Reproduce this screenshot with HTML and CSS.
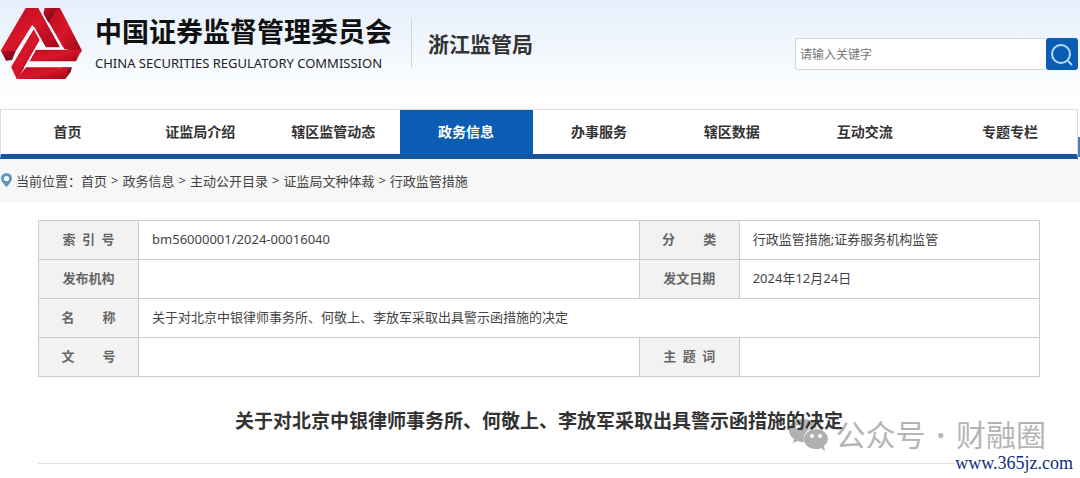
FILE: index.html
```html
<!DOCTYPE html>
<html lang="zh-CN">
<head>
  <meta charset="UTF-8" />
  <meta name="viewport" content="width=device-width, initial-scale=1.0" />
  <title>关于对北京中银律师事务所、何敬上、李放军采取出具警示函措施的决定</title>
  <link rel="stylesheet" href="styles.css">
</head>
<body>
  <header class="header">
    <svg class="logo" viewBox="0 0 252 234" aria-hidden="true">
      <defs>
        <linearGradient id="red" x1="0" y1="0" x2="1" y2="1">
          <stop offset="0" stop-color="#b80c1c" />
          <stop offset="0.5" stop-color="#d8162a" />
          <stop offset="1" stop-color="#a00616" />
        </linearGradient>
        <linearGradient id="fold" x1="0" y1="0" x2="1" y2="1">
          <stop offset="0" stop-color="#c8102a" />
          <stop offset="1" stop-color="#5c0410" />
        </linearGradient>
      </defs>
      <path fill="url(#fold)" d="M2 139H48L36 168L18 170Z" />
      <path fill="url(#fold)" d="M134 12H176L146 56L128 38Z" />
      <path fill="url(#fold)" d="M186 190H216L212 204L196 225Z" />
      <path fill="url(#red)" d="M77 12H116L180 130H138L97 62L48 140H2Z" />
      <path fill="url(#red)" d="M146 54L172 12H180L245 138L243 146L192 134Z" />
      <path fill="url(#red)" d="M106 137H245L228 172H88Z" />
      <path fill="url(#red)" d="M78 190H206L196 225H50Z" />
      <path fill="url(#red)" d="M102 74L120 108L62 210L50 225L32 186Z" />
      <path fill="none" stroke="#f3f7fd" stroke-width="5" d="M101 70L122 108L74 192M100 72L30 190M118 12L185 133M106 134H190" />
    </svg>
    <div class="brand">
      <div class="brand-cn">中国证券监督管理委员会</div>
      <div class="brand-en">CHINA SECURITIES REGULATORY COMMISSION</div>
    </div>
    <div class="bureau">浙江监管局</div>
    <form class="search">
      <input type="text" placeholder="请输入关键字" aria-label="请输入关键字">
      <button type="button" aria-label="搜索">
        <svg viewBox="0 0 32 32">
          <circle cx="15" cy="16" r="9" />
          <path d="M22 23L26 27" />
        </svg>
      </button>
    </form>
  </header>

  <nav class="nav">
    <a href="#">首页</a>
    <a href="#">证监局介绍</a>
    <a href="#">辖区监管动态</a>
    <a href="#" class="active">政务信息</a>
    <a href="#">办事服务</a>
    <a href="#">辖区数据</a>
    <a href="#">互动交流</a>
    <a href="#" class="last">专题专栏</a>
  </nav>

  <div class="crumbs">
    <svg class="pin" viewBox="0 0 13 16" aria-hidden="true">
      <path d="M6.500 1A5.500 5.500 0 0 0 1 6.500C1 10 6.500 15 6.500 15S12 10 12 6.500A5.500 5.500 0 0 0 6.500 1Z" />
      <circle cx="6.500" cy="6.500" r="2.600" />
    </svg>
    <span>当前位置：</span>
    <a href="#">首页</a><i>&gt;</i>
    <a href="#">政务信息</a><i>&gt;</i>
    <a href="#">主动公开目录</a><i>&gt;</i>
    <a href="#">证监局文种体裁</a><i>&gt;</i>
    <a href="#">行政监管措施</a>
  </div>

  <main class="content">
    <table class="info">
      <colgroup>
        <col class="col-label"><col class="col-wide"><col class="col-label"><col class="col-narrow">
      </colgroup>
      <tr>
        <th>索&ensp;引&ensp;号</th>
        <td>bm56000001/2024-00016040</td>
        <th>分&emsp;&emsp;&thinsp;类</th>
        <td>行政监管措施;证券服务机构监管</td>
      </tr>
      <tr>
        <th>发布机构</th>
        <td></td>
        <th>发文日期</th>
        <td>2024年12月24日</td>
      </tr>
      <tr>
        <th>名&emsp;&emsp;&thinsp;称</th>
        <td colspan="3">关于对北京中银律师事务所、何敬上、李放军采取出具警示函措施的决定</td>
      </tr>
      <tr>
        <th>文&emsp;&emsp;&thinsp;号</th>
        <td></td>
        <th>主&ensp;题&ensp;词</th>
        <td></td>
      </tr>
    </table>
    <div class="title-box">
      <h1>关于对北京中银律师事务所、何敬上、李放军采取出具警示函措施的决定</h1>
      <div class="watermark">
        <svg viewBox="0 0 40 34" aria-hidden="true">
          <path d="M15 1C7 1 1 6 1 12C1 16 3 19 6 21L5 25L10 23C12 24 14 24 16 24C14 15 21 9 29 10C27 4 22 1 15 1Z" />
          <path d="M28 11C21 11 16 16 16 21C16 27 21 31 28 31C30 31 32 31 33 30L37 33L36 28C38 26 40 24 40 21C40 16 35 11 28 11Z" />
          <g fill="#fff">
            <circle cx="10" cy="9" r="2" /><circle cx="20" cy="9" r="2" />
            <circle cx="24" cy="18" r="2" /><circle cx="32" cy="18" r="2" />
          </g>
        </svg>
        <span>公众号<b>·</b>财融圈</span>
      </div>
      <div class="site">www.365jz.com</div>
    </div>
  </main>
</body>
</html>
```
FILE: styles.css
```css
* {
  box-sizing: border-box;
}

body {
  margin: 0;
  font-family: "Noto Sans", "Noto Sans CJK SC", sans-serif;
  font-size: 13px;
  color: #444;
  background: #fff;
}

a {
  color: inherit;
  text-decoration: none;
}

.header {
  display: flex;
  align-items: flex-start;
  height: 109px;
  padding: 4px 2px 0 0;
  background: linear-gradient(#e5effb, #fff 100px);
}

.logo {
  width: 84px;
  height: 78px;
  flex: none;
}

.brand {
  padding: 8px 0 0 11px;
  white-space: nowrap;
}

.brand-cn {
  font-size: 27px;
  font-weight: 700;
  line-height: 40px;
  color: #111;
}

.brand-en {
  font-size: 13px;
  line-height: 22px;
  color: #222;
}

.bureau {
  margin: 14px 0 0 19px;
  padding: 2px 0 0 16px;
  border-left: 1px solid #ccd3dc;
  font-size: 21px;
  font-weight: 700;
  line-height: 48px;
  color: #333;
  white-space: nowrap;
}

.search {
  display: flex;
  width: 283px;
  margin: 34px 0 0 auto;
}

.search input {
  flex: 1;
  min-width: 0;
  height: 32px;
  padding: 0 4px;
  border: 1px solid #d5d9de;
  border-right: none;
  border-radius: 3px 0 0 3px;
  font: 12px "Noto Sans", "Noto Sans CJK SC", sans-serif;
}

.search input::placeholder {
  color: #777;
}

.search button {
  width: 32px;
  height: 32px;
  padding: 0;
  border: none;
  border-radius: 3px;
  background: #0b5cb3;
}

.search svg {
  display: block;
  fill: none;
  stroke: #b8ddfb;
  stroke-width: 2;
}

.nav {
  position: relative;
  display: flex;
  height: 50px;
  margin-right: 2px;
  border: 1px solid #ddd;
  border-bottom: 5px solid #15569f;
}

.nav::after {
  content: "";
  position: absolute;
  right: -3px;
  bottom: -3px;
  width: 2px;
  height: 20px;
  background: #4a7fb8;
}

.nav a {
  flex: 0 0 12.35%;
  font-size: 14px;
  font-weight: 700;
  line-height: 44px;
  text-align: center;
  color: #333;
}

.nav a.last {
  flex: 1;
  padding-left: 12px;
}

.nav a.active {
  color: #fff;
  background: #0b5cb3;
}

.crumbs {
  display: flex;
  align-items: center;
  height: 44px;
  padding-bottom: 2px;
  background: #f7f7f7;
}

.crumbs i {
  margin: 0 4px;
  font-style: normal;
}

.pin {
  width: 13px;
  height: 16px;
  margin-right: 3px;
  fill: #5f96c4;
}

.pin circle {
  fill: #fff;
}

.content {
  padding: 17px 40px 14px 38px;
}

.info {
  width: 100%;
  table-layout: fixed;
  border-collapse: collapse;
}

.col-label {
  width: 10%;
}

.col-wide {
  width: 50%;
}

.info th,
.info td {
  height: 39px;
  padding: 0 13px 2px;
  border: 1px solid #ccc;
  text-align: left;
  line-height: 20px;
}

.info th {
  padding: 0 0 2px;
  text-align: center;
  color: #666;
  background: #f2f2f2;
}

.title-box {
  position: relative;
  padding: 30px 0 28px;
  border-bottom: 1px solid #e3e3e3;
}

.title-box h1 {
  position: relative;
  z-index: 1;
  margin: 0;
  font-size: 19px;
  font-weight: 700;
  line-height: 28px;
  text-align: center;
  color: #333;
}

.watermark {
  position: absolute;
  right: -6px;
  bottom: 11px;
  display: flex;
  align-items: center;
  gap: 8px;
  font-size: 30px;
  line-height: 32px;
  color: #b5b5b5;
  white-space: nowrap;
}

.watermark b {
  margin: 0 11px;
}

.watermark svg {
  width: 40px;
  height: 34px;
  fill: #b0b0b0;
}

.site {
  position: absolute;
  right: -33px;
  bottom: -9px;
  font-family: "Liberation Serif", serif;
  font-size: 18px;
  line-height: 18px;
  color: #0d2f7a;
  background: #fff;
}
```
